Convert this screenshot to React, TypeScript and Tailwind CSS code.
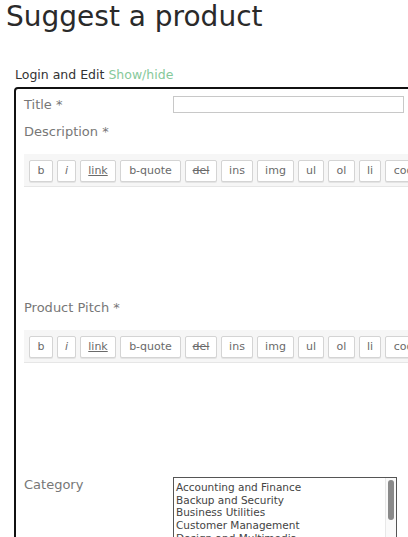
import React from "react";

const tools = [
  { label: "b", w: "w-[24px]", extra: "" },
  { label: "i", w: "w-[19px]", extra: "italic" },
  { label: "link", w: "w-[36px]", extra: "underline" },
  { label: "b-quote", w: "w-[61px]", extra: "" },
  { label: "del", w: "w-[32px]", extra: "line-through" },
  { label: "ins", w: "w-[32px]", extra: "" },
  { label: "img", w: "w-[37px]", extra: "" },
  { label: "ul", w: "w-[26px]", extra: "" },
  { label: "ol", w: "w-[27px]", extra: "" },
  { label: "li", w: "w-[22px]", extra: "" },
  { label: "code", w: "w-[44px]", extra: "" },
];

const categories = [
  "Accounting and Finance",
  "Backup and Security",
  "Business Utilities",
  "Customer Management",
  "Design and Multimedia",
  "Developer Tools",
];

function Toolbar() {
  return (
    <div className="mt-[13px] flex h-[33px] w-[400px] gap-[4px] border-b border-[#e6e6e6] bg-[#f6f6f6] pl-[5px] pt-[6px]">
      {tools.map((t) => (
        <button
          key={t.label}
          className={`flex h-[22px] shrink-0 items-center justify-center rounded-[2px] border border-[#d4d4d4] bg-white text-[11px] text-[#6a6a6a] shadow-[0_1px_0_#e4e4e4] ${t.w} ${t.extra}`}
        >
          {t.label}
        </button>
      ))}
    </div>
  );
}

export default function App() {
  return (
    <div className="h-[537px] w-[408px] overflow-hidden bg-white font-['DejaVu_Sans',sans-serif] text-[#333]">
      <h1 className="ml-[6px] pt-[1px] text-[28px] leading-[32px] text-[#2a2a2a]">
        Suggest a product
      </h1>

      <div className="ml-[15px] mt-[34px] text-[12.5px] leading-[16px] text-[#333]">
        Login and Edit <span className="text-[#86c99a]">Show/hide</span>
      </div>

      <div className="ml-[14px] mt-[4px] w-[420px] rounded-tl-[4px] border-2 border-[#111] pl-[8px] pt-[7px]">
        <div className="flex h-[17px] items-center">
          <label className="w-[149px] text-[13px] text-[#777]">Title *</label>
          <input className="h-[17px] w-[231px] border border-[#c8c8c8] bg-white" />
        </div>

        <div className="mt-[10px] text-[13px] leading-[18px] text-[#777]">Description *</div>
        <Toolbar />
        <div className="h-[112px]" />

        <div className="text-[13px] leading-[18px] text-[#777]">Product Pitch *</div>
        <Toolbar />
        <div className="h-[113px]" />

        <div className="flex items-start">
          <label className="w-[149px] text-[13px] leading-[18px] text-[#777]">Category</label>
          <div className="mt-[1px] flex h-[80px] w-[224px] border border-[#555] bg-white">
            <ul className="flex-1 pl-[2px] pt-[3px] text-[10.5px] leading-[12.7px] text-[#444]">
              {categories.map((c) => (
                <li key={c}>{c}</li>
              ))}
            </ul>
            <div className="w-[11px] border-l border-[#e8e8e8] bg-[#fafafa] pl-[2px] pt-[2px]">
              <div className="h-[40px] w-[6px] rounded-full bg-[#8a8a8a]" />
            </div>
          </div>
        </div>
      </div>
    </div>
  );
}
